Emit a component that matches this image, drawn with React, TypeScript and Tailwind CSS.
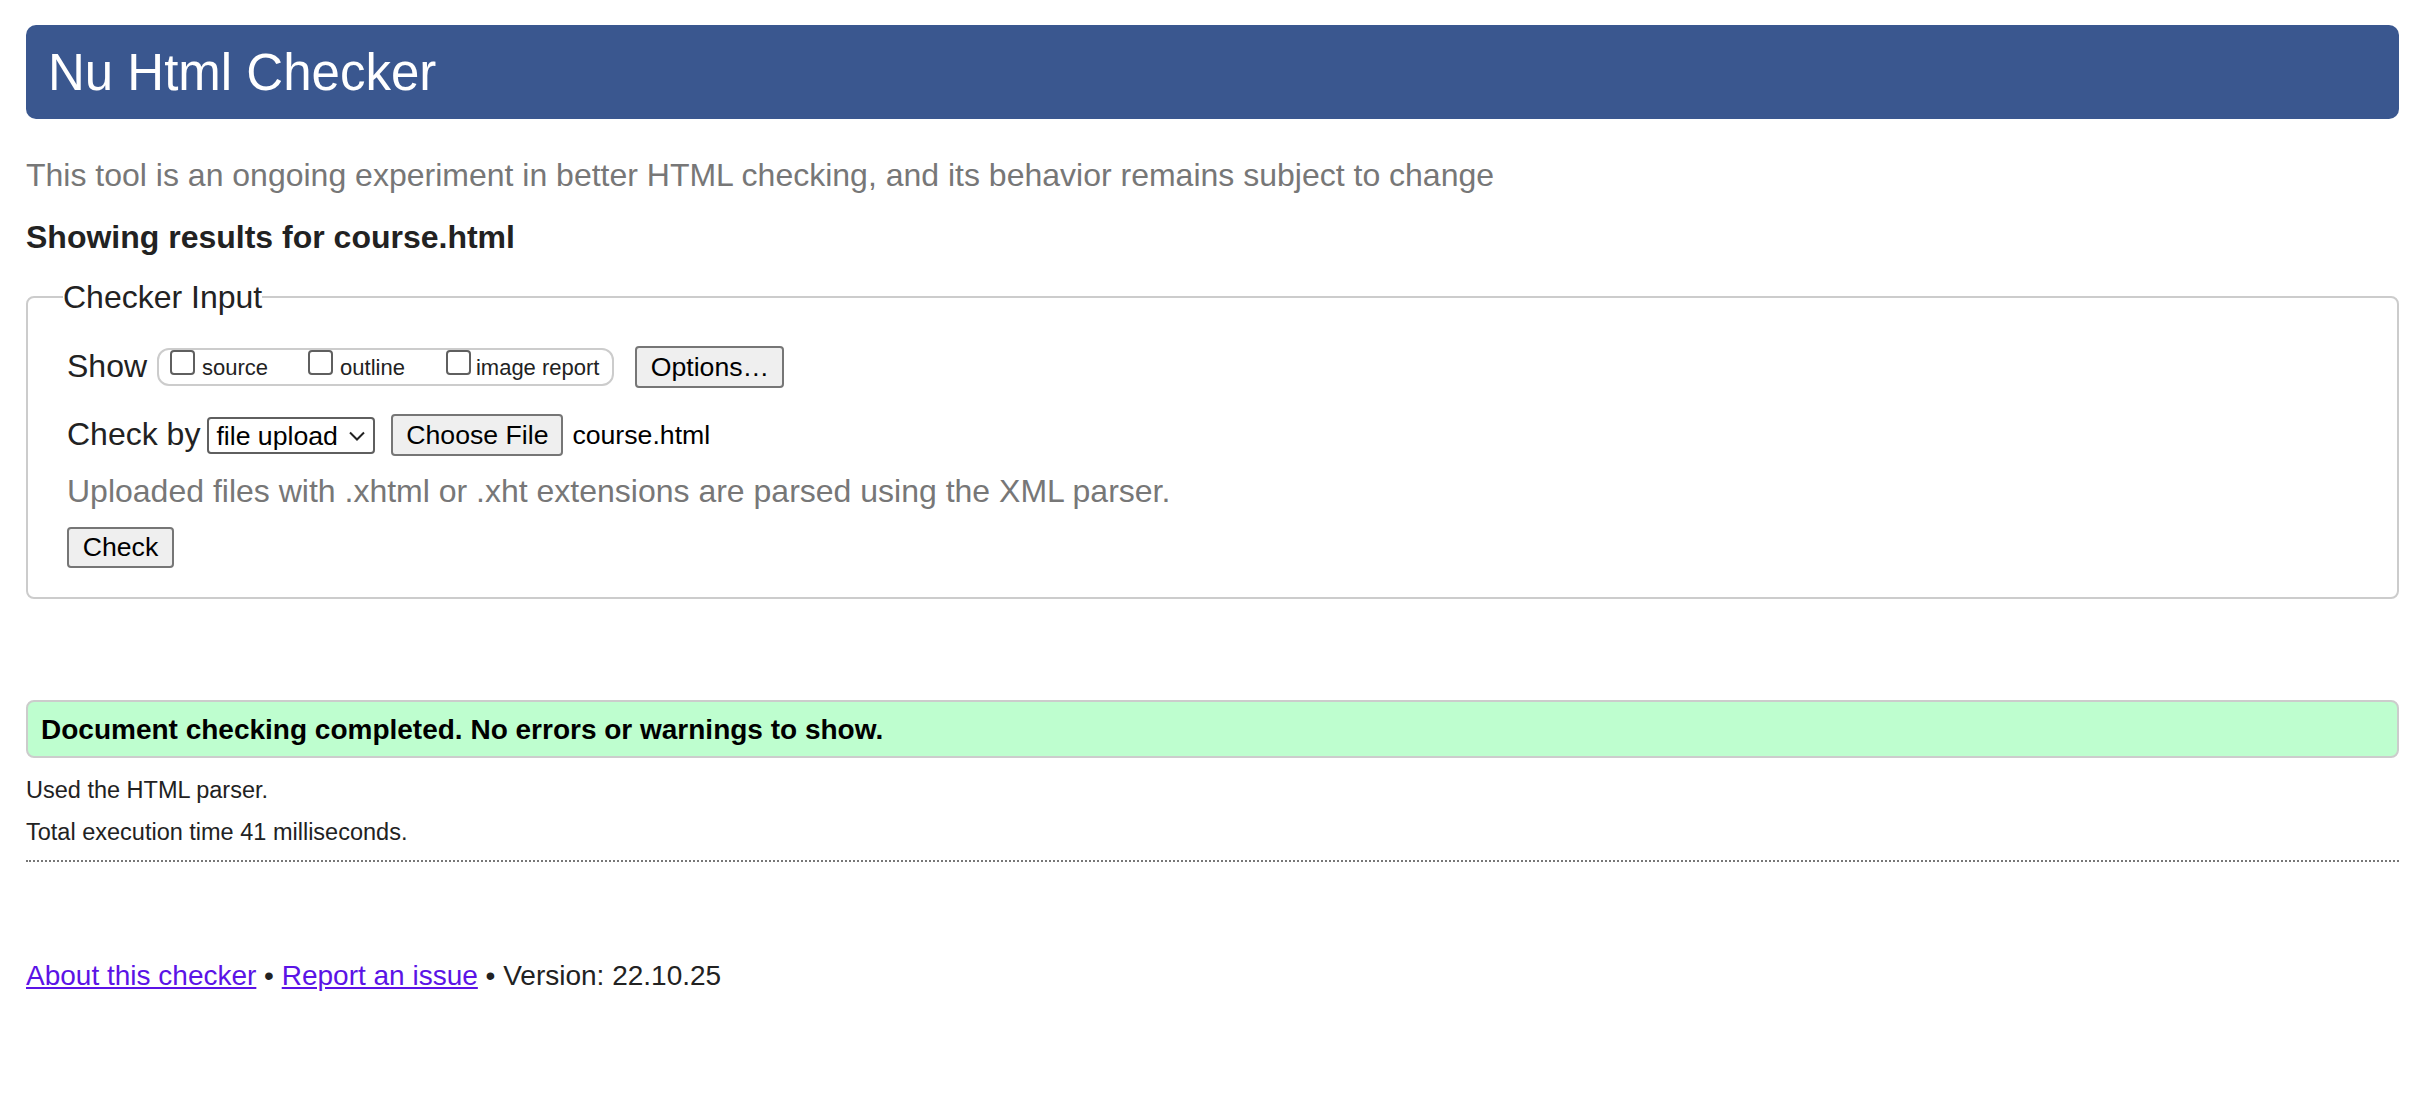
import React from 'react';

function Checkbox({ label, className }: { label: string; className?: string }) {
  return (
    <div className={`flex items-start ${className ?? ''}`}>
      <span className="block h-[25px] w-[25px] rounded-[4px] border-2 border-[#5f5f5f] bg-white" />
      <span className="ml-[7px] mt-[7px] text-[22px] leading-[22px] text-[#222]">{label}</span>
    </div>
  );
}

function Btn({ children, className }: { children: React.ReactNode; className?: string }) {
  return (
    <button
      type="button"
      className={`flex items-center justify-center rounded-[4px] border-2 border-[#767676] bg-[#efefef] pb-[1px] text-[26.67px] leading-[30px] text-black ${className ?? ''}`}
    >
      {children}
    </button>
  );
}

export default function App() {
  return (
    <div className="min-h-[1100px] bg-white pl-[26px] pr-[25px] pt-[25px] font-['Liberation_Sans',Arial,sans-serif] text-[32px] leading-[40px] text-[#222]">
      <h1 className="h-[94px] rounded-[10px] bg-[#3a578f] pl-[22px] text-[51px] font-normal leading-[95px] text-white">
        Nu Html Checker
      </h1>

      <p className="mt-[35.5px] text-[#777]">
        This tool is an ongoing experiment in better HTML checking, and its behavior remains subject to change
      </p>

      <h2 className="mt-[22px] text-[32px] font-bold leading-[40px]">Showing results for course.html</h2>

      <fieldset className="mt-[20.5px] rounded-lg border-2 border-[#ccc] px-[35px] pb-[29px] pt-[27px]">
        <legend className="text-[32px] leading-[40px]">Checker Input</legend>
        <div className="pl-[4px]">
          {/* show row */}
          <div className="flex h-[44px] items-start">
            <span className="mt-[1.5px]">Show</span>
            <div className="ml-[10px] mt-[4px] flex h-[38px] items-start rounded-[12px] border-2 border-[#ccc] pl-[11px] pr-[13px]">
              <Checkbox label="source" />
              <Checkbox label="outline" className="ml-[40px]" />
              <div className="ml-[41px] flex items-start">
                <span className="block h-[25px] w-[25px] rounded-[4px] border-2 border-[#5f5f5f] bg-white" />
                <span className="ml-[5px] mt-[7px] text-[22px] leading-[22px] text-[#222]">image report</span>
              </div>
            </div>
            <Btn className="ml-[21px] mt-[2px] h-[42px] w-[149px]">Options…</Btn>
          </div>

          {/* check by row */}
          <div className="mt-[24px] flex h-[44px] items-start">
            <span className="mt-[1.5px]">Check by</span>
            <div className="ml-[7px] mt-[5px] flex h-[37px] w-[168px] items-center rounded-[4px] border-2 border-[#5f5f5f] bg-white pl-[7px] pr-[8px] text-[26.67px] leading-[33px] text-black">
              <span className="mt-[1px]">file upload</span>
              <svg className="ml-auto" width="16" height="10" viewBox="0 0 16 10" fill="none">
                <polyline points="1,1.5 8,8.5 15,1.5" stroke="#222" strokeWidth="2" />
              </svg>
            </div>
            <Btn className="ml-[16px] mt-[2px] h-[42px] w-[172px]">Choose File</Btn>
            <span className="ml-[9px] mt-[3px] text-[26.67px] leading-[40px] text-black">course.html</span>
          </div>

          <p className="mt-[15px] text-[#777]">
            Uploaded files with .xhtml or .xht extensions are parsed using the XML parser.
          </p>

          <Btn className="mt-[15.6px] h-[41px] w-[107px]">Check</Btn>
        </div>
      </fieldset>

      <div className="mt-[101px] h-[58px] rounded-lg border-2 border-[#ccc] bg-[#befecf] pl-[13px] text-[28px] font-bold leading-[56px] text-black">
        Document checking completed. No errors or warnings to show.
      </div>

      <p className="mt-[12.5px] text-[23.5px] leading-[41.6px]">Used the HTML parser.</p>
      <p className="text-[23.5px] leading-[41.6px]">Total execution time 41 milliseconds.</p>

      <div className="mt-[7px] border-t-2 border-dotted border-[#777]" />

      <p className="mt-[93.5px] text-[28px] leading-[40px]">
        <a href="#" className="text-[#5b13e6] underline">About this checker</a> •{' '}
        <a href="#" className="text-[#5b13e6] underline">Report an issue</a> • Version: 22.10.25
      </p>
    </div>
  );
}
